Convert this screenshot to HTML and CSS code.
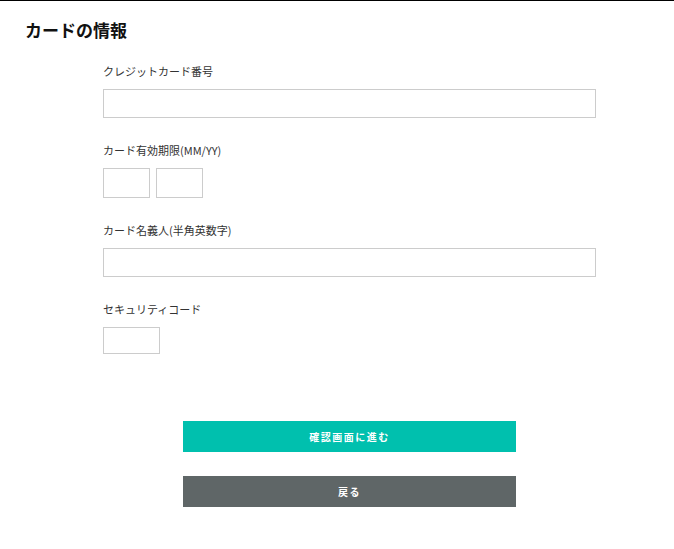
FILE: index.html
```html
<!DOCTYPE html>
<html lang="ja">
<head>
    <meta charset="UTF-8">
    <meta name="viewport" content="width=device-width, initial-scale=1.0">
    <title>カードの情報</title>
    <link rel="stylesheet" href="styles.css">
</head>
<body>
    <div class="card-page">
        <h1>カードの情報</h1>
        <form class="card-form">
            <div class="field">
                <label for="cardNo">クレジットカード番号</label>
                <input type="text" id="cardNo" class="input-wide">
            </div>
            <div class="field">
                <label>カード有効期限(MM/YY)</label>
                <div class="expiry">
                    <input type="text" class="input-short">
                    <input type="text" class="input-short">
                </div>
            </div>
            <div class="field">
                <label for="cardName">カード名義人(半角英数字)</label>
                <input type="text" id="cardName" class="input-wide">
            </div>
            <div class="field">
                <label for="cvc">セキュリティコード</label>
                <input type="text" id="cvc" class="input-code">
            </div>
            <div class="actions">
                <button type="button" class="btn-next">確認画面に進む</button>
                <button type="button" class="btn-back">戻る</button>
            </div>
        </form>
    </div>
</body>
</html>
```

FILE: styles.css
```css
body {
    margin: 0;
    background-color: #fff;
    font-family: "Noto Sans CJK JP", "Noto Sans", sans-serif;
    color: #222;
}
.card-page {
    border-top: 1px solid #000;
}
h1 {
    margin: 17px 0 0 25px;
    font-size: 17px;
    line-height: 24px;
    font-weight: bold;
    color: #111;
}
.card-form {
    width: 493px;
    margin: 0 0 0 103px;
    padding-top: 21px;
}
.field {
    margin-bottom: 24px;
}
.field label {
    display: block;
    font-size: 11px;
    line-height: 16px;
    margin-bottom: 10px;
    color: #333;
}
.field input {
    display: block;
    box-sizing: border-box;
    border: 1px solid #ccc;
    border-radius: 0;
    height: 29px;
    margin: 0;
    padding: 0 8px;
    font-size: 13px;
}
.input-wide {
    width: 493px;
}
.expiry {
    display: flex;
    gap: 6px;
}
.field .input-short {
    width: 47px;
    height: 30px;
}
.field .input-code {
    width: 57px;
    height: 27px;
}
.actions {
    display: flex;
    flex-direction: column;
    align-items: center;
    gap: 24px;
    padding-top: 43px;
}
.actions button {
    width: 333px;
    height: 31px;
    border: none;
    color: #fff;
    font-family: inherit;
    font-size: 10px;
    font-weight: bold;
    letter-spacing: 1.5px;
    cursor: pointer;
}
.btn-next {
    background-color: #00c0ae;
}
.btn-back {
    background-color: #5f6667;
}
```
